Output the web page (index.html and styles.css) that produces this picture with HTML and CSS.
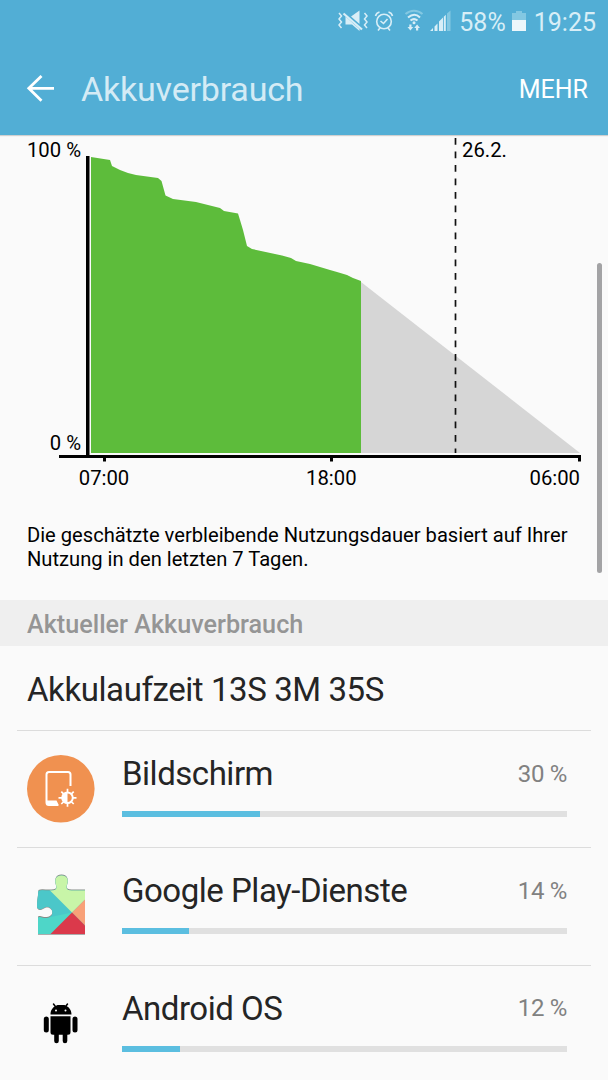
FILE: index.html
```html
<!DOCTYPE html>
<html lang="de">
<head>
    <meta charset="UTF-8">
    <meta name="viewport" content="width=device-width, initial-scale=1.0">
    <title>Akkuverbrauch</title>
    <link rel="stylesheet" href="styles.css">
</head>
<body>

<div class="screen">
    <header class="header">
        <div class="status-bar">
            <svg class="status-icons" width="116" height="44" viewBox="336 0 116 44">
                <!-- vibrate / muted -->
                <g fill="none" stroke="#d8eef7" stroke-width="1.5">
                    <path d="M339 13l2.500 3-2.500 3 2.500 3-2.500 3 2.500 3M364.500 13l2.500 3-2.500 3 2.500 3-2.500 3 2.500 3"/>
                    <path d="M343.500 13.500L362 29.500" stroke-width="2.200"/>
                </g>
                <path d="M359.500 10.500v13.500l-8.500-7.500zM345.500 16.500l14 12.500v2l-7.500-6.500h-6.500z" fill="#d8eef7"/>
                <!-- alarm -->
                <g fill="none" stroke="#d8eef7" stroke-width="1.6">
                    <circle cx="384" cy="21.500" r="7.300"/>
                    <path d="M380.500 21l3 2.500 4-4.500M375.500 16c.5-2 2-3.500 4-4M392.500 16c-.5-2-2-3.500-4-4M380 28l-2 2.500M388 28l2 2.500"/>
                </g>
                <!-- wifi -->
                <g fill="none" stroke="#d8eef7" stroke-width="2">
                    <path d="M405.500 14c5-4.500 12-4.500 17 0" stroke="#83c8e2"/>
                    <path d="M408 17.500c4-3.500 8.500-3.500 12 0M410.500 20.500c2.500-2 4.500-2 7 0"/>
                </g>
                <circle cx="414" cy="22.700" r="1.500" fill="#d8eef7"/>
                <path d="M409.300 24.500h2.200v2.500h1.800l-2.900 3.500-2.900-3.500h1.800zM416 30.500h2.200v-2.500h1.800l-2.900-3.500-2.900 3.500h1.800z" fill="#d8eef7"/>
                <!-- signal -->
                <path d="M430 31l3-3v3zM434.500 26.500l3-3V31h-3zM439 21.500l4-4V31h-4zM443.800 16.800l2-2V31h-2z" fill="#d8eef7"/>
                <path d="M447 13.500l3.500-3V31H447z" fill="#83c8e2"/>
            </svg>
            <span class="battery-level">58%</span>
            <svg class="battery-icon" width="14" height="44" viewBox="0 0 14 44">
                <path d="M4 11h6v2h4v7H0v-7h4z" fill="#83c8e2"/>
                <path d="M0 20h14v11H0z" fill="#edf7fb"/>
            </svg>
            <span class="clock">19:25</span>
        </div>
        <div class="app-bar">
            <svg class="back" width="28" height="28" viewBox="0 0 28 28" fill="none" stroke="#fff" stroke-width="2.800">
                <path d="M15.500 1L2.800 13.300l12.700 12.400M2.800 13.300H28"/>
            </svg>
            <h1 class="title">Akkuverbrauch</h1>
            <span class="more">MEHR</span>
        </div>
    </header>

    <svg class="chart" width="608" height="365" viewBox="0 135 608 365">
        <path d="M361 282L580 453H361z" fill="#d6d6d6"/>
        <path d="M91 157l19 3 2 6 8 4 8 3 8 2 22 3 3.500 3 4 14.500 7.500 3.500 23 3 24 6 4 3 14 2.500 2 6.500 3 10 4 16 5 3 30 6.500 9 2.500 5 3 14 3 10 3 10 3 7 2 10 3 6 3 8 3V453H91z" fill="#5dbc3b"/>
        <path d="M455.500 138V453" stroke="#111" stroke-width="1.700" stroke-dasharray="6.700 6.800"/>
        <!-- axes -->
        <path d="M86 156h3.500v299H86zM59 455h522v6.500h-3V458H59zM103 458h3v3.500h-3zM330 458h3v3.500h-3z"/>
        <g class="chart-labels">
            <text x="81" y="156.500" text-anchor="end">100 %</text>
            <text x="81" y="449.500" text-anchor="end">0 %</text>
            <text x="462" y="156.500">26.2.</text>
            <text x="104" y="485" text-anchor="middle">07:00</text>
            <text x="331.300" y="485" text-anchor="middle">18:00</text>
            <text x="580" y="485" text-anchor="end">06:00</text>
        </g>
    </svg>

    <p class="hint">Die geschätzte verbleibende Nutzungsdauer basiert auf Ihrer<br>Nutzung in den letzten 7 Tagen.</p>

    <h2 class="section">Aktueller Akkuverbrauch</h2>

    <div class="runtime">Akkulaufzeit 13S 3M 35S</div>

    <ul class="usage">
        <li class="item">
            <svg class="icon" width="68" height="68" viewBox="0 0 68 68">
                <circle cx="33.800" cy="33.800" r="33.800" fill="#f09150"/>
                <path d="M43.500 31V19.500q0-2.500-2.500-2.500H22q-2.500 0-2.500 2.500v28q0 2.500 2.500 2.500h9" fill="none" stroke="#fff" stroke-width="2"/>
                <path d="M20 45.500h9.500l2.500 5H22q-2 0-2-2z" fill="#fff"/>
                <g transform="translate(40.500 42.800)">
                    <path d="M0-9V9M-9 0H9M-6.200-6.200L6.200 6.200M-6.200 6.200L6.200-6.200" stroke="#fff" stroke-width="1.700"/>
                    <circle r="5.300" fill="#f09150" stroke="#fff" stroke-width="2"/>
                    <path d="M0-5.300A5.300 5.300 0 0 0 0 5.300z" fill="#fff"/>
                </g>
            </svg>
            <div class="info">
                <div class="row"><span class="name">Bildschirm</span><span class="percent">30 %</span></div>
                <div class="bar"><div class="fill" style="width: 31%"></div></div>
            </div>
        </li>
        <li class="item">
            <svg class="icon" width="68" height="68" viewBox="0 0 68 68">
                <defs>
                    <clipPath id="puzzle">
                        <path id="piece" d="M11.500 19c3-1.500 8 0 13-.5q5 0 5-3c0-3-1.500-4-1-8 .7-2.500 3-4 6-4s5.500 1.500 6 4c.5 4-1 5-1 8q0 3 5 3H58V62H11V46q0-1.500 2-1l4 1c5 .5 8.500-2 8.500-5.500s-3-6.500-7-5.500l-4 2c-3 1-5-1-4.500-4z"/>
                    </clipPath>
                </defs>
                <use href="#piece" y="-1" fill="#858b87"/>
                <use href="#piece" y=".8" fill="#929292"/>
                <g clip-path="url(#puzzle)">
                    <path d="M8 0h60v68H8z" fill="#4ed6c8"/>
                    <path d="M8 10h16l21 30.400-24 5-13-10z" fill="#49bfc9" opacity=".65"/>
                    <path d="M22.500 18V0H58v27.400l-13 13z" fill="#c8f5a8"/>
                    <path d="M45 40.400l13-13v26z" fill="#f8a078"/>
                    <path d="M45 40.400L23 62.500h35v-9z" fill="#db394b"/>
                </g>
            </svg>
            <div class="info">
                <div class="row"><span class="name">Google Play-Dienste</span><span class="percent">14 %</span></div>
                <div class="bar"><div class="fill" style="width: 15%"></div></div>
            </div>
        </li>
        <li class="item">
            <svg class="icon" width="68" height="68" viewBox="0 0 68 68">
                <path d="M23.500 24.500c0-5 3-8 7-9.500h7c4 1.500 7 4.500 7 9.500zM23.500 26.200h20v16q0 2.500-2.500 2.500H26q-2.500 0-2.500-2.500z"/>
                <path d="M26.500 14l3 4M40.500 14l-3 4" stroke="#000" stroke-width="1.500" stroke-linecap="round"/>
                <path d="M19.300 29v11M48 29v11" stroke="#000" stroke-width="5" stroke-linecap="round"/>
                <path d="M29.500 43v8M38 43v8" stroke="#000" stroke-width="4.600" stroke-linecap="round"/>
                <circle cx="29" cy="20.500" r="1" fill="#fff"/>
                <circle cx="38.500" cy="20.500" r="1" fill="#fff"/>
            </svg>
            <div class="info">
                <div class="row"><span class="name">Android OS</span><span class="percent">12 %</span></div>
                <div class="bar"><div class="fill" style="width: 13%"></div></div>
            </div>
        </li>
    </ul>

    <div class="scrollbar"></div>
</div>

</body>
</html>
```
FILE: styles.css
```css
body {
    margin: 0;
    background-color: #fafafa;
    color: #252525;
    font-family: Roboto, sans-serif;
}

.screen {
    position: relative;
    width: 608px;
    height: 1080px;
    overflow: hidden;
}

.header {
    height: 135px;
    background-color: #52aed5;
    box-shadow: 0 1px 1px #d0d0d0;
}

.status-bar {
    display: flex;
    align-items: center;
    justify-content: flex-end;
    height: 44px;
    padding-right: 12px;
    color: #d8eef7;
    font-size: 25px;
}

.battery-level {
    margin: 0 6px 0 7px;
}

.clock {
    margin-left: 8px;
}

.app-bar {
    display: flex;
    align-items: center;
    height: 90px;
    padding: 0 20px 0 26px;
}

.title {
    flex: 1;
    margin: 0 0 0 27px;
    color: #d4ebf5;
    font-size: 34px;
    font-weight: 400;
    letter-spacing: -0.2px;
}

.more {
    color: #fff;
    font-size: 25px;
}

.chart {
    display: block;
}

.chart-labels {
    fill: #000;
    font-size: 20.3px;
}

.hint {
    height: 77px;
    margin: 0;
    padding: 23px 0 0 27px;
    color: #000;
    font-size: 20.15px;
    line-height: 24px;
    white-space: nowrap;
}

.section {
    height: 46px;
    margin: 0;
    padding-left: 27px;
    background-color: #efefef;
    color: #959595;
    font-size: 25.2px;
    font-weight: 500;
    line-height: 49px;
}

.runtime {
    height: 84px;
    padding-left: 27px;
    font-size: 33px;
    letter-spacing: -0.42px;
    line-height: 88px;
}

.usage {
    margin: 0 17px;
    padding: 0;
    list-style: none;
}

.item {
    display: flex;
    box-sizing: border-box;
    height: 117.3px;
    padding: 24px 24px 0 10px;
    border-top: 1px solid #dcdcdc;
}

.icon {
    flex: none;
    margin-right: 27px;
}

.info {
    flex: 1;
}

.row {
    display: flex;
    align-items: center;
    justify-content: space-between;
    height: 37px;
}

.name {
    font-size: 33px;
    letter-spacing: -0.48px;
}

.percent {
    color: #818181;
    font-size: 24px;
    letter-spacing: -0.3px;
}

.bar {
    height: 6px;
    margin-top: 19px;
    background-color: #e0e0e0;
}

.fill {
    height: 100%;
    background-color: #5bbee0;
}

/* scroll position marker, floats above the content */
.scrollbar {
    position: absolute;
    top: 263px;
    right: 6px;
    width: 5px;
    height: 310px;
    border-radius: 3px;
    background-color: #a3a3a5;
}
```
